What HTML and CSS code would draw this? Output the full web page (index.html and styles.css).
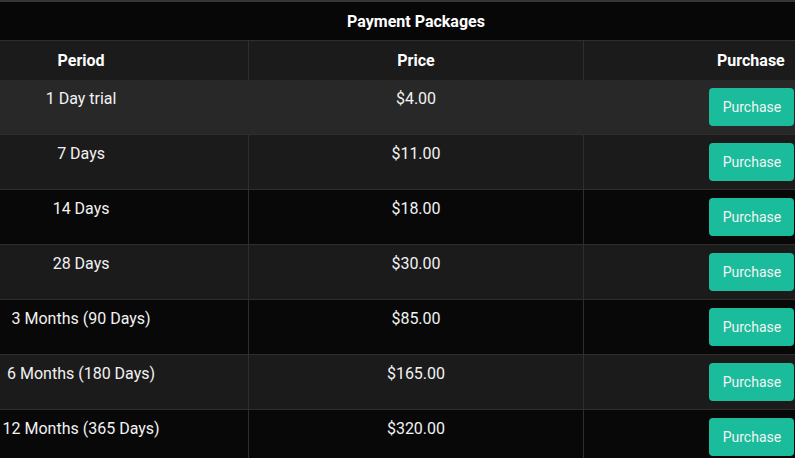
FILE: index.html
```html
<!DOCTYPE html>
<html>
<head>
<meta charset="utf-8">
<link rel="stylesheet" href="styles.css">
</head>
<body>
<div class="wrap">
<table class="packages">
  <thead>
    <tr><th class="title" colspan="3">Payment Packages</th></tr>
    <tr class="head">
      <th>Period</th>
      <th>Price</th>
      <th>Purchase</th>
    </tr>
  </thead>
  <tbody>
    <tr class="row active"><td>1 Day trial</td><td>$4.00</td><td><button class="buy">Purchase</button></td></tr>
    <tr class="row mid"><td>7 Days</td><td>$11.00</td><td><button class="buy">Purchase</button></td></tr>
    <tr class="row dark"><td>14 Days</td><td>$18.00</td><td><button class="buy">Purchase</button></td></tr>
    <tr class="row mid"><td>28 Days</td><td>$30.00</td><td><button class="buy">Purchase</button></td></tr>
    <tr class="row dark"><td>3 Months (90 Days)</td><td>$85.00</td><td><button class="buy">Purchase</button></td></tr>
    <tr class="row mid"><td>6 Months (180 Days)</td><td>$165.00</td><td><button class="buy">Purchase</button></td></tr>
    <tr class="row dark"><td>12 Months (365 Days)</td><td>$320.00</td><td><button class="buy">Purchase</button></td></tr>
  </tbody>
</table>
</div>
</body>
</html>
```
FILE: styles.css
```css
html, body {
  margin: 0;
  padding: 0;
  background: #080808;
  overflow: hidden;
}
body {
  font-family: Roboto, "Liberation Sans", sans-serif;
  color: #f2f2f2;
}
.wrap {
  margin-left: -86px;
  width: 1004px;
}
.packages {
  width: 1004px;
  border-collapse: collapse;
  table-layout: fixed;
  border-top: 2px solid #353535;
}
.packages th, .packages td {
  text-align: center;
  vertical-align: top;
  font-size: 16px;
  line-height: 21px;
}
.title {
  background: #070707;
  color: #fff;
  font-weight: bold;
  padding: 9px 8px 8px;
  border-bottom: 1px solid #2e2e2e;
}
.head th {
  background: #1b1b1b;
  color: #fff;
  font-weight: bold;
  padding: 9px 8px 8px;
  border-left: 1px solid #2e2e2e;
}
.head th:first-child { border-left: none; }
.row td {
  padding: 8px;
  border-top: 1px solid #2e2e2e;
  border-left: 1px solid #2e2e2e;
}
.row td:first-child { border-left: none; }
.row td:last-child { padding-left: 10px; }
.row.active td {
  background: #282828;
  border-left-color: #282828;
  border-top-color: #1b1b1b;
}
.row.mid td { background: #1b1b1b; }
.row.dark td { background: #080808; }
.buy {
  display: inline-block;
  width: 85px;
  height: 38px;
  border: none;
  border-radius: 4px;
  background: #1abc9c;
  color: #f4f4f4;
  font-family: Roboto, "Liberation Sans", sans-serif;
  font-size: 14px;
  padding: 0;
  margin: 0;
  vertical-align: top;
}
```
